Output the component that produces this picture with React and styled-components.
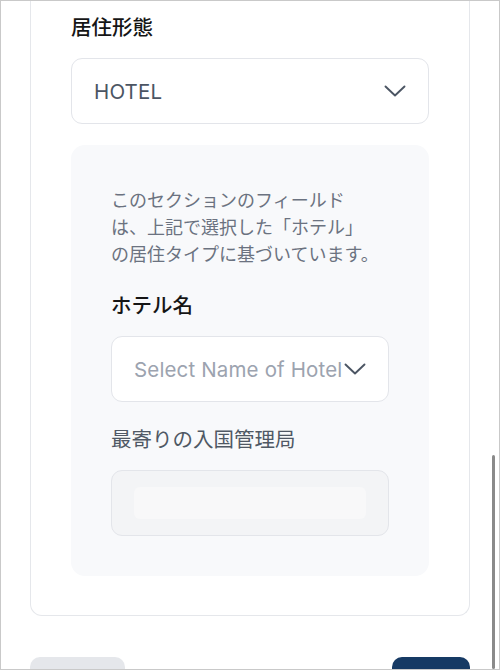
import React from "react";
import styled, { createGlobalStyle } from "styled-components";

const Global = createGlobalStyle`
  html, body { margin: 0; padding: 0; background: #ffffff; }
  body { font-family: "Inter", "Noto Sans CJK JP", sans-serif; }
  * { box-sizing: border-box; }
`;

const Frame = styled.div`
  position: relative;
  width: 500px;
  height: 670px;
  border: 1px solid #c9c9c9;
  overflow: hidden;
  background: #ffffff;
  padding: 0 29px;
  display: flex;
  flex-direction: column;
`;

const Card = styled.div`
  border: 1px solid #e5e7eb;
  border-top: none;
  border-radius: 0 0 12px 12px;
  padding: 12px 40px 39px;
  display: flex;
  flex-direction: column;
`;

const Label = styled.div`
  font-family: "Inter", "Noto Sans CJK JP", sans-serif;
  font-size: 20.5px;
  line-height: 30px;
  font-weight: ${(p) => (p.$muted ? 400 : 500)};
  color: ${(p) => (p.$muted ? "#4f5864" : "#151515")};
  margin-bottom: 15px;
`;

const SelectBox = styled.div`
  height: 66px;
  border: 1px solid #e3e5ea;
  border-radius: 11px;
  background: #ffffff;
  display: flex;
  align-items: center;
  justify-content: space-between;
  gap: 2px;
  padding: 0 22px 0 22px;
  font-family: "Inter", "Noto Sans CJK JP", sans-serif;
  font-size: 20.5px;
  letter-spacing: 0.15px;
  color: ${(p) => (p.$placeholder ? "#9ca3af" : "#4b5563")};
  white-space: nowrap;
`;

const SelectText = styled.span`
  overflow: hidden;
  flex: 0 1 auto;
`;

const Panel = styled.div`
  margin-top: 21px;
  background: #f8f9fb;
  border-radius: 14px;
  padding: 42px 40px 40px;
  display: flex;
  flex-direction: column;
`;

const Note = styled.p`
  margin: 0 0 23px;
  font-family: "Inter", "Noto Sans CJK JP", sans-serif;
  font-size: 18px;
  line-height: 27px;
  color: #6b7280;
`;

const Gap = styled.div`
  height: ${(p) => p.$h}px;
`;

const DisabledInput = styled.div`
  height: 66px;
  border: 1px solid #e3e5ea;
  border-radius: 11px;
  background: #f3f4f6;
  padding: 16px 22px;
  display: flex;
`;

const DisabledInner = styled.div`
  flex: 1;
  background: #f8f8f9;
  border-radius: 6px;
`;

const Footer = styled.div`
  margin-top: 41px;
  display: flex;
  justify-content: space-between;
`;

const Button = styled.div`
  width: ${(p) => p.$w}px;
  height: 48px;
  border-radius: 10px;
  background: ${(p) => (p.$primary ? "#163a64" : "#e5e7eb")};
`;

const ScrollThumb = styled.div`
  position: absolute;
  right: 4px;
  top: 454px;
  bottom: 0;
  width: 3px;
  border-radius: 2px;
  background: #8a8a8a;
`;

const Chevron = () => (
  <svg width="22" height="12" viewBox="0 0 22 12" fill="none" style={{ flexShrink: 0 }}>
    <polyline points="1.5,1.5 11,10.5 20.5,1.5" stroke="#4b5563" strokeWidth="1.9" strokeLinecap="round" strokeLinejoin="round" />
  </svg>
);

export default function App() {
  return (
    <>
      <Global />
      <Frame>
        <Card>
          <Label>居住形態</Label>
          <SelectBox>
            <SelectText>HOTEL</SelectText>
            <Chevron />
          </SelectBox>
          <Panel>
            <Note>
              このセクションのフィールド
              <br />
              は、上記で選択した「ホテル」
              <br />
              の居住タイプに基づいています。
            </Note>
            <Label>ホテル名</Label>
            <SelectBox $placeholder>
              <SelectText>Select Name of Hotel</SelectText>
              <Chevron />
            </SelectBox>
            <Gap $h={23} />
            <Label $muted>最寄りの入国管理局</Label>
            <DisabledInput>
              <DisabledInner />
            </DisabledInput>
          </Panel>
        </Card>
        <Footer>
          <Button $w={95} />
          <Button $w={78} $primary />
        </Footer>
        <ScrollThumb />
      </Frame>
    </>
  );
}
